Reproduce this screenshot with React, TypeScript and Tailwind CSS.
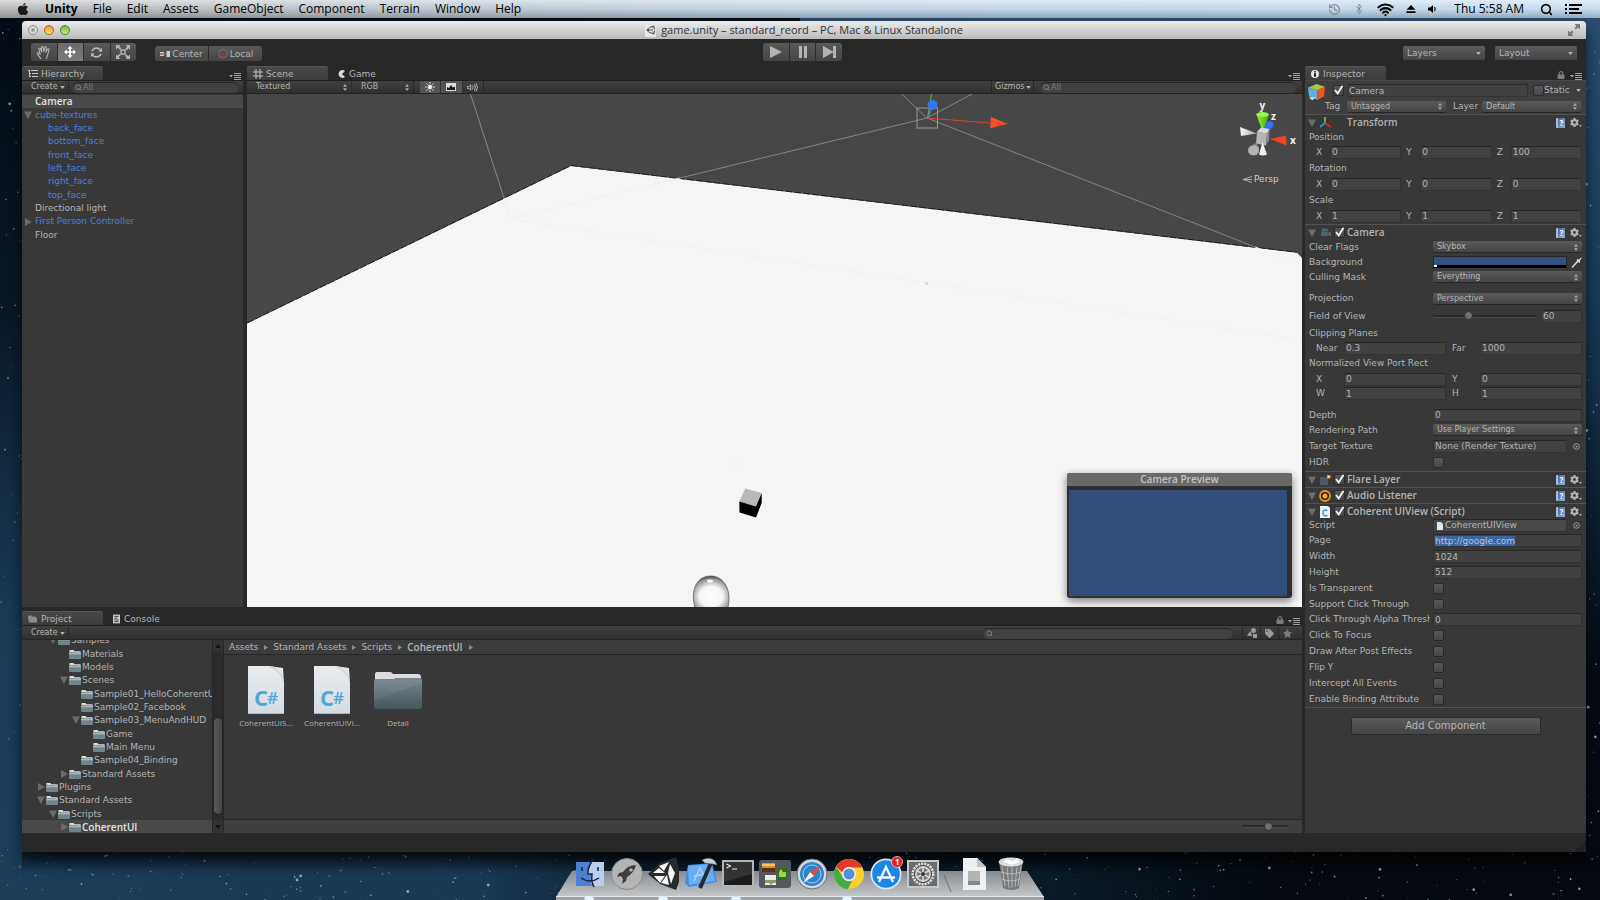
import { useEffect, useRef, type ReactNode } from 'react';
import { Bluetooth, History, Search, Wifi } from 'lucide-react';
import { FaApple, FaLock, FaTag } from 'react-icons/fa';
import { FaGear, FaStar } from 'react-icons/fa6';

const MENUS = ['File', 'Edit', 'Assets', 'GameObject', 'Component', 'Terrain', 'Window', 'Help'];

interface HierarchyNode {
  name: string;
  depth: number;
  prefab?: boolean;
  selected?: boolean;
  fold?: 'open' | 'closed';
}

const HIERARCHY: HierarchyNode[] = [
  { name: 'Camera', depth: 0, selected: true },
  { name: 'cube-textures', depth: 0, prefab: true, fold: 'open' },
  { name: 'back_face', depth: 1, prefab: true },
  { name: 'bottom_face', depth: 1, prefab: true },
  { name: 'front_face', depth: 1, prefab: true },
  { name: 'left_face', depth: 1, prefab: true },
  { name: 'right_face', depth: 1, prefab: true },
  { name: 'top_face', depth: 1, prefab: true },
  { name: 'Directional light', depth: 0 },
  { name: 'First Person Controller', depth: 0, prefab: true, fold: 'closed' },
  { name: 'Floor', depth: 0 },
];

interface ProjectNode {
  name: string;
  depth: number;
  fold?: 'open' | 'closed';
  selected?: boolean;
}

const PROJECT_TREE: ProjectNode[] = [
  { name: 'Samples', depth: 1, fold: 'open' },
  { name: 'Materials', depth: 2 },
  { name: 'Models', depth: 2 },
  { name: 'Scenes', depth: 2, fold: 'open' },
  { name: 'Sample01_HelloCoherentUI', depth: 3 },
  { name: 'Sample02_Facebook', depth: 3 },
  { name: 'Sample03_MenuAndHUD', depth: 3, fold: 'open' },
  { name: 'Game', depth: 4 },
  { name: 'Main Menu', depth: 4 },
  { name: 'Sample04_Binding', depth: 3 },
  { name: 'Standard Assets', depth: 2, fold: 'closed' },
  { name: 'Plugins', depth: 0, fold: 'closed' },
  { name: 'Standard Assets', depth: 0, fold: 'open' },
  { name: 'Scripts', depth: 1, fold: 'open' },
  { name: 'CoherentUI', depth: 2, fold: 'closed', selected: true },
];

const STARS = Array.from({ length: 420 }, (_, i) => {
  const a = Math.abs(Math.sin(i * 12.9898) * 43758.5453) % 1;
  const b = Math.abs(Math.sin(i * 78.233) * 12543.123) % 1;
  const c = Math.abs(Math.sin(i * 37.719) * 9631.77) % 1;
  // most of the sky is covered by the window, so keep them along the edges
  const low = i % 5 !== 0;
  return {
    x: low ? a * 1600 : i % 2 ? a * 22 : 1586 + a * 14,
    y: low ? 852 + b * 48 : b * 900,
    r: c > 0.94 ? 1.4 : 0.4 + c * 0.5,
    o: 0.15 + c * 0.5,
  };
});

function Wallpaper() {
  return (
    <svg className="absolute inset-0 h-full w-full" viewBox="0 0 1600 900" preserveAspectRatio="none" aria-hidden="true">
      <defs>
        <linearGradient id="skyLeft" x1="0" y1="0" x2="0" y2="1">
          <stop offset="0" stopColor="#040c16" />
          <stop offset="0.35" stopColor="#0a1826" />
          <stop offset="0.7" stopColor="#1b3c59" />
          <stop offset="1" stopColor="#1c4060" />
        </linearGradient>
        <linearGradient id="skyBottom" x1="0" y1="0" x2="1" y2="0">
          <stop offset="0" stopColor="#1c3e5b" />
          <stop offset="0.15" stopColor="#1b3953" />
          <stop offset="0.3" stopColor="#1a3954" />
          <stop offset="0.4" stopColor="#0d2030" />
          <stop offset="0.66" stopColor="#0a1a27" />
          <stop offset="0.8" stopColor="#04090f" />
          <stop offset="1" stopColor="#04080f" />
        </linearGradient>
        <linearGradient id="skyRight" x1="0" y1="0" x2="0" y2="1">
          <stop offset="0" stopColor="#2a4f70" />
          <stop offset="0.35" stopColor="#1a3a56" />
          <stop offset="0.55" stopColor="#0d2133" />
          <stop offset="0.75" stopColor="#060c14" />
          <stop offset="1" stopColor="#04080f" />
        </linearGradient>
        <linearGradient id="skyShade" x1="0" y1="0" x2="0" y2="1">
          <stop offset="0" stopColor="#000" stopOpacity="0.6" />
          <stop offset="1" stopColor="#000" stopOpacity="0" />
        </linearGradient>
      </defs>
      <rect width="1600" height="900" fill="#050d16" />
      <rect width="800" height="900" fill="url(#skyLeft)" />
      <rect x="800" width="800" height="900" fill="url(#skyRight)" />
      <rect y="846" width="1600" height="54" fill="url(#skyBottom)" />
      <rect x="22" y="850" width="1564" height="24" fill="url(#skyShade)" />
      {STARS.map((s, i) => (
        <circle key={i} cx={s.x} cy={s.y} r={s.r} fill="#cfe0ee" opacity={s.o} />
      ))}
    </svg>
  );
}

function MenuBar() {
  return (
    <header className="relative flex h-[18px] items-center bg-linear-to-r from-[#b9b9b9] via-[#bfd3e4] to-[#c4dbee] pr-[18px] pl-4 text-[12px] leading-[18px] text-black">
      <div className="pointer-events-none absolute inset-0 bg-linear-to-b from-white/50 via-transparent to-black/20" />
      <nav className="relative flex flex-1 items-center gap-[15px]">
        <button type="button" aria-label="Apple menu">
          <FaApple className="size-[14px] text-[#1c1c1c]" />
        </button>
        <button type="button" className="font-bold">Unity</button>
        {MENUS.map((menu) => (
          <button key={menu} type="button">{menu}</button>
        ))}
      </nav>
      <div className="relative flex items-center gap-3">
        <History className="size-[13px] text-[#7f8b96]" />
        <Bluetooth className="size-3 text-[#7f8b96]" />
        <Wifi className="size-[17px]" strokeWidth={3} />
        <svg viewBox="0 0 10 10" className="size-[10px]"><path d="M5 1l4.500 4.800h-9zM.5 7.300h9v1.700h-9z" /></svg>
        <svg viewBox="0 0 10 10" className="mr-1 size-[10px]"><path d="M0 3.500h2.200L5 1v8L2.200 6.500H0z" /><path d="M6.500 3q1.500 2 0 4" fill="none" stroke="#000" strokeWidth="1.200" /></svg>
        <span className="pr-1">Thu 5:58 AM</span>
        <Search className="size-[13px]" strokeWidth={3} />
        <svg viewBox="0 0 17 12" className="h-3 w-[17px]">
          <path d="M0 1h2v2H0zM4 1h13v2H4zM0 5h2v2H0zM4 5h10v2H4zM0 9h2v2H0zM4 9h13v2H4z" />
        </svg>
      </div>
    </header>
  );
}

function UnityMark({ className, fill = '#555' }: { className?: string; fill?: string }) {
  return (
    <svg viewBox="0 0 24 24" className={className}>
      <path
        fill={fill}
        d="M22 9.800L19.600 1 10.900 3.400 9.600 5.700 7 5.700 .6 12l6.400 6.300h2.600l1.300 2.300L19.600 23 22 14.200 20.700 12zM18 5l-3.200 5.600H8.400L5.900 8.100 10.500 6.800zM8.400 13.400h6.400L18 19l-7.500-1.800-4.600-1.300zM18.700 18.200L15.500 12l3.200-6.200L20.500 12z"
      />
    </svg>
  );
}

function TitleBar() {
  return (
    <div className="flex h-[18px] shrink-0 items-center rounded-t-[4px] bg-linear-to-b from-[#ededed] to-[#b9b9b9] px-[6px] text-[#333]">
      <div className="flex w-20 gap-[6px]">
        <button type="button" aria-label="Close" className="size-[10px] rounded-full border border-[#8c8c8c] bg-radial from-[#777] via-[#ddd] to-[#ccc]" />
        <button type="button" aria-label="Minimize" className="size-[10px] rounded-full border border-[#a2671a] bg-linear-to-b from-[#e99a2c] to-[#ffdc73]" />
        <button type="button" aria-label="Zoom" className="size-[10px] rounded-full border border-[#4c8028] bg-linear-to-b from-[#74b84b] to-[#c4f08c]" />
      </div>
      <h1 className="flex flex-1 items-center justify-center gap-[5px] font-['Open_Sans',sans-serif] text-[11px] leading-[18px]">
        <span className="flex h-[13px] w-[11px] items-center justify-center bg-[#e8e8e8]">
          <UnityMark className="size-[10px]" />
        </span>
        game.unity – standard_reord – PC, Mac &amp; Linux Standalone
      </h1>
      <div className="flex w-20 justify-end">
        <button type="button" aria-label="Full screen">
          <svg viewBox="0 0 12 12" className="size-3" fill="#777">
            <path d="M6.500 0H12v5.500L10 3.500 8 5.500 6.500 4l2-2zM5.500 12H0V6.500l2 2 2-2L5.500 8l-2 2z" />
          </svg>
        </button>
      </div>
    </div>
  );
}

function ToolButton({ label, active, children }: { label: string; active?: boolean; children: ReactNode }) {
  return (
    <button
      type="button"
      aria-label={label}
      className={`flex h-full flex-1 items-center justify-center border-r border-[#2c2c2c] last:border-r-0 ${
        active ? 'bg-linear-to-b from-[#6a6a6a] to-[#7c7c7c]' : 'bg-linear-to-b from-[#585858] to-[#454545]'
      }`}
    >
      {children}
    </button>
  );
}

function Toolbar() {
  return (
    <div className="flex h-[27px] shrink-0 items-start justify-between bg-[#282828] pt-1 pr-[9px] pl-[9px] text-[#b4b4b4]">
      <div className="flex w-[460px] gap-[19px]">
        <div className="flex h-[18px] w-[105px] overflow-hidden rounded-[3px]">
          <ToolButton label="Hand tool">
            <svg viewBox="0 0 16 16" className="size-[15px]" fill="none" stroke="#b4b4b4" strokeWidth="1.100" strokeLinejoin="round" strokeLinecap="round">
              <path d="M5 14.500L1.500 9.500q-.6-1.300.8-1.300L4.500 10 3 4.500q0-1.400 1.400-1L6 7.500 5.800 2.200q.7-1.400 1.700 0L8.300 7l1-4.800q1-1.100 1.700.2L10.600 7.600l1.800-3.400q1.300-.7 1.500.6L12.300 11 11 14.500" />
            </svg>
          </ToolButton>
          <ToolButton label="Move tool" active>
            <svg viewBox="0 0 14 14" className="size-3" fill="#fff">
              <path d="M7 0l3 3.200H8v2.800h2.800V4L14 7l-3.200 3V8H8v2.800h2L7 14l-3-3.200h2V8H3.200v2L0 7l3.200-3v2H6V3.200H4z" />
            </svg>
          </ToolButton>
          <ToolButton label="Rotate tool">
            <svg viewBox="0 0 14 14" className="size-[13px]" fill="none" stroke="#b4b4b4" strokeWidth="1.800">
              <path d="M2 5.500Q4 2 7.500 2.200 10 2.300 11.300 4.500M12 8.500Q10 12 6.500 11.800 4 11.700 2.700 9.500" />
              <path d="M13 2v4.300H9zM1 12V7.700h4z" fill="#b4b4b4" stroke="none" />
            </svg>
          </ToolButton>
          <ToolButton label="Scale tool">
            <svg viewBox="0 0 14 14" className="size-[14px]" fill="#b4b4b4">
              <path d="M0 0h4.500L3.200 1.300l2 2-1.400 1.400-2-2L0 4.500zM14 0v4.500l-1.300-1.300-2 2-1.400-1.400 2-2L9.500 0zM0 14V9.500l1.300 1.300 2-2 1.400 1.400-2 2L4.500 14zM14 14H9.500l1.300-1.300-2-2 1.400-1.400 2 2L14 9.500z" />
              <path d="M5 5h4v4H5z" fill="none" stroke="#b4b4b4" strokeWidth="1.400" />
            </svg>
          </ToolButton>
        </div>
        <div className="mt-[3px] flex h-[15px] w-[107px] overflow-hidden rounded-[3px] text-[9px] leading-[14px]">
          <ToolButton label="Pivot: Center">
            <svg viewBox="0 0 10 6" className="mr-[2px] h-[6px] w-[10px]"><path d="M0 1h4v1.500H0zM0 3.500h4V5H0z" fill="#ccc" /><path d="M4 2h2v2H4z" fill="#d33" /><path d="M6.500 0H10v6H6.500z" fill="#ccc" /></svg>
            Center
          </ToolButton>
          <ToolButton label="Rotation: Local">
            <svg viewBox="0 0 10 11" className="mr-[2px] h-[11px] w-[10px]" fill="none"><path d="M5 1l4 2v5L5 10 1 8V3z" stroke="#777" /><path d="M5 5v5M1 8l4-2 4 2" stroke="#a8323c" strokeWidth="1.200" /></svg>
            Local
          </ToolButton>
        </div>
      </div>
      <div className="mr-[3px] flex h-[18px] w-[79px] overflow-hidden rounded-[3px]">
        <ToolButton label="Play"><svg viewBox="0 0 12 12" className="size-3" fill="#b4b4b4"><path d="M0 0l12 6-12 6z" /></svg></ToolButton>
        <ToolButton label="Pause"><svg viewBox="0 0 12 12" className="size-3" fill="#b4b4b4"><path d="M2 0h3v12H2zM7 0h3v12H7z" /></svg></ToolButton>
        <ToolButton label="Step"><svg viewBox="0 0 13 12" className="h-3 w-[13px]" fill="#b4b4b4"><path d="M0 0l10 5.500V0h3v12h-3V6.500L0 12z" /></svg></ToolButton>
      </div>
      <div className="flex w-[460px] justify-end gap-[10px] pt-[3px]">
        {['Layers', 'Layout'].map((name) => (
          <button key={name} type="button" className="flex h-[14px] w-[82px] items-center justify-between rounded-[2px] bg-linear-to-b from-[#5c5c5c] to-[#444] px-1 text-[9px] leading-[13px]">
            {name}
            <Caret />
          </button>
        ))}
      </div>
    </div>
  );
}

function Caret() {
  return <svg viewBox="0 0 6 4" className="h-[3px] w-[5px] shrink-0" fill="#b4b4b4"><path d="M0 0h6L3 4z" /></svg>;
}

function Fold({ state }: { state?: 'open' | 'closed' }) {
  if (!state) return <span className="w-2 shrink-0" />;
  return (
    <svg viewBox="0 0 8 8" className="size-2 shrink-0" fill="#6b6b6b">
      <path d={state === 'open' ? 'M0 .5h8L4 8z' : 'M1 0l7 4-7 4z'} />
    </svg>
  );
}

function PaneMenu() {
  return (
    <button type="button" aria-label="Pane options" className="h-[7px]">
      <svg viewBox="0 0 12 7" className="h-[7px] w-3" fill="#a0a0a0">
        <path d="M0 2h4L2 4.500zM5 0h7v1H5zM5 2h7v1H5zM5 4h7v1H5zM5 6h7v1H5z" />
      </svg>
    </button>
  );
}

function Tab({ active, icon, children, width }: { active?: boolean; icon: ReactNode; children: ReactNode; width: string }) {
  return (
    <button
      type="button"
      className={`flex h-[14px] items-center gap-[3px] rounded-t-[2px] border-t pl-[6px] text-[9px] leading-[14px] text-[#b4b4b4] ${width} ${
        active ? 'border-[#555] bg-linear-to-b from-[#484848] to-[#3c3c3c]' : 'border-transparent'
      }`}
    >
      {icon}
      {children}
    </button>
  );
}

function SearchBox({ label, placeholder, className }: { label: string; placeholder?: string; className: string }) {
  return (
    <label className={`flex h-[11px] items-center gap-px rounded-full border-t border-[#232323] bg-[#414141] pl-[3px] ${className}`}>
      <Search className="size-[7px] shrink-0 text-[#8a8a8a]" strokeWidth={3} />
      <input type="text" aria-label={label} placeholder={placeholder} className="h-[10px] w-full min-w-0 bg-transparent text-[8px] leading-[10px] outline-none placeholder:text-[#7d7d7d]" />
    </label>
  );
}

const BAR = 'flex shrink-0 items-center border-y border-t-[#1f1f1f] border-b-[#242424] bg-linear-to-b from-[#404040] to-[#303030] text-[8px] leading-[12px] text-[#b4b4b4]';

function CreateButton() {
  return (
    <button type="button" className="flex h-full w-[38px] shrink-0 items-center justify-between border-r border-[#282828] pr-[3px]">
      Create
      <Caret />
    </button>
  );
}

function HierarchyPanel() {
  return (
    <section className="flex w-[221px] shrink-0 flex-col bg-[#383838]">
      <div className="flex items-end justify-between bg-[#282828] pr-[2px]">
        <Tab active width="w-[81px]" icon={<svg viewBox="0 0 10 8" className="h-2 w-[10px]" fill="#c4c4c4"><path d="M0 0h2v1H0zM3 0h7v1H3zM1 1h1v6H1zM4 3h6v1H4zM2 3h1v1H2zM4 6h6v1H4zM2 6h1v1H2z" /></svg>}>
          Hierarchy
        </Tab>
        <PaneMenu />
      </div>
      <div className={`${BAR} h-[14px] pr-[5px] pl-[9px]`}>
        <CreateButton />
        <SearchBox label="Search hierarchy" placeholder="All" className="ml-[3px] flex-1" />
      </div>
      <ul className="flex h-[148px] flex-col pt-px text-[9px] leading-[13px]">
        {HIERARCHY.map((node) => (
          <li
            key={node.name}
            className={`flex flex-1 items-center gap-[3px] pl-[2px] ${node.selected ? "bg-[#494949] font-['Open_Sans',sans-serif] text-[10px] font-semibold text-[#e2e2e2]" : node.prefab ? 'text-[#4c7edb]' : 'text-[#b4b4b4]'}`}
          >
            <Fold state={node.fold} />
            <span className={node.depth ? 'pl-[13px]' : ''}>{node.name}</span>
          </li>
        ))}
      </ul>
    </section>
  );
}

function SceneView() {
  return (
    <svg className="absolute inset-0 h-full w-full" viewBox="247 94 1055 513" preserveAspectRatio="xMidYMid slice" role="img" aria-label="Scene">
      <defs>
        <radialGradient id="capsule" cx="0.5" cy="0.65" r="0.65">
          <stop offset="0" stopColor="#fff" />
          <stop offset="0.5" stopColor="#f6f6f6" />
          <stop offset="0.85" stopColor="#969696" />
          <stop offset="1" stopColor="#3e3e3e" />
        </radialGradient>
        <linearGradient id="green" x1="0" x2="1"><stop offset="0" stopColor="#8cf03a" /><stop offset="1" stopColor="#4fa814" /></linearGradient>
        <linearGradient id="grey" x1="0" x2="1"><stop offset="0" stopColor="#f5f5f5" /><stop offset="1" stopColor="#a8a8a8" /></linearGradient>
      </defs>
      <rect x="247" y="94" width="1055" height="513" fill="#474747" />
      <path d="M247 323.500L571 166 1297 252.700 1302 258V607H247z" fill="#f5f5f5" />
      <path d="M247 323L571 165.500 1297 252.200" fill="none" stroke="#111" strokeWidth="0.800" strokeDasharray="7 2" />
      <g fill="none" stroke="#8c8c8c" strokeWidth="0.900">
        <path d="M470.500 94L504 198M901.500 94L927 118 972 94M927 118L680 178M927 118L1255 247" />
      </g>
      <g fill="none" stroke="#f0f0f0" strokeWidth="1">
        <path d="M504 198l5 21L680 178M509 219L1302 340M1255 247l47 17" />
        <path d="M738 458.500l4.500 4.500-4.500 4.500-4.500-4.500z" />
      </g>
      <rect x="925" y="282" width="3" height="3" fill="#dcdcdc" />
      <rect x="917" y="108" width="20.500" height="20" fill="none" stroke="#9a9a9a" />
      <path d="M931.500 94L927.500 118" stroke="#7bb51e" />
      <path d="M932 106L928 118" stroke="#3f7ff5" strokeWidth="1.500" />
      <circle cx="932.700" cy="105" r="5" fill="#3577f6" />
      <path d="M927 118l63 5" stroke="#d8432a" />
      <path d="M991 117l17 7-18 4.500z" fill="#f4502a" />
      <path d="M1000 125.500l8-1.500-18 4.500z" fill="#8d2510" />

      <path d="M745.300 488.500l16.400 4.500-5.700 13.500-16.700-5z" fill="#b8b8b8" />
      <path d="M739.300 501.500l16.700 5 5.700-13.500v10L756 517.500l-16.500-5z" fill="#000" />
      <path d="M695 607.500C690 590 697 576 710.500 576S732 590 728 607.500z" fill="url(#capsule)" stroke="#555" strokeWidth="0.700" />
      <ellipse cx="710" cy="581" rx="3" ry="1.500" fill="#fff" />

      {/* orientation gizmo */}
      <path d="M1256.500 114.500L1261.500 129h2.500l5-14.500z" fill="url(#green)" />
      <ellipse cx="1262.500" cy="114.500" rx="6.200" ry="2.500" fill="#9af54f" />
      <path d="M1266 122l7.500 3-3 5-6-1z" fill="#2c6bea" />
      <circle cx="1269.500" cy="124.500" r="3.600" fill="#2f72f5" />
      <path d="M1240 127l1 9 16-2.500z" fill="url(#grey)" />
      <path d="M1286 135.500l.5 10L1270 139z" fill="#ef4323" />
      <path d="M1257 132l4-4.500 8.500 1.500-2.500 4.500z" fill="#d9d9dc" />
      <path d="M1257 132l10 1.500-1 12-10-2z" fill="#b4b4b8" />
      <path d="M1267 133.500l2.500-4.500-.5 11-3 5.500z" fill="#8c8c92" />
      <path d="M1249 147l7-4 3 4-2 8z" fill="#8e8e90" />
      <ellipse cx="1253.500" cy="150.500" rx="5.500" ry="5" fill="#b2b2b5" />
      <path d="M1262.500 142l-3.500 12.500q4 2 8 0z" fill="#f0f0f0" />
      <g fill="#f2f2f2" fontFamily="'Open Sans', sans-serif" fontWeight="700" fontSize="10">
        <text x="1259.500" y="109">y</text>
        <text x="1271" y="120">z</text>
        <text x="1290" y="144">x</text>
      </g>
      <path d="M1252 176.500l-9 3 9 3M1252 179.500h-9" fill="none" stroke="#b8b8b8" strokeWidth="0.900" />
      <text x="1254" y="182" fill="#cdcdcd" fontFamily="'DejaVu Sans', sans-serif" fontSize="9">Persp</text>
    </svg>
  );
}

function UpDown() {
  return <svg viewBox="0 0 4 7" className="h-[7px] w-1 shrink-0" fill="#a8a8a8"><path d="M2 0l2 2.800H0zM2 7l2-2.800H0z" /></svg>;
}

function ScenePanel() {
  return (
    <section className="flex min-w-0 flex-1 flex-col">
      <div className="flex items-end bg-[#282828] pr-[2px]">
        <Tab active width="w-[81px]" icon={<svg viewBox="0 0 10 10" className="size-[10px]" stroke="#c4c4c4"><path d="M3 0v10M7 0v10M0 3h10M0 7h10" /></svg>}>
          Scene
        </Tab>
        <Tab width="w-[80px] ml-1" icon={<svg viewBox="0 0 8 8" className="size-2" fill="#d8d8d8"><path d="M7 1Q4-1 1.500 1.500-.5 4 1.500 6.500 4 9 7 7L4 4z" /></svg>}>
          Game
        </Tab>
        <span className="flex-1" />
        <PaneMenu />
      </div>
      <div className={`${BAR} h-[14px] pr-[6px] pl-[9px]`}>
        <button type="button" className="flex h-full w-[96px] items-center justify-between border-r border-[#282828] pr-1">Textured <UpDown /></button>
        <button type="button" className="ml-[9px] flex h-full w-[53px] items-center justify-between border-r border-[#282828] pr-1">RGB <UpDown /></button>
        <div className="ml-[6px] flex h-full w-16">
          <button type="button" aria-label="Scene lighting" className="flex flex-1 items-center justify-center border-r border-[#333] bg-[#545454]">
            <svg viewBox="0 0 12 12" className="size-[10px]" stroke="#f0f0f0" strokeWidth="1.200">
              <circle cx="6" cy="6" r="2.300" fill="#f0f0f0" />
              <path d="M6 0v2M6 10v2M0 6h2M10 6h2M1.800 1.800l1.400 1.400M8.800 8.800l1.400 1.400M1.800 10.200l1.400-1.400M8.800 3.200l1.400-1.400" />
            </svg>
          </button>
          <button type="button" aria-label="Scene effects" className="flex flex-1 items-center justify-center border-r border-[#333] bg-[#545454]">
            <svg viewBox="0 0 10 8" className="h-2 w-[10px]"><path d="M0 0h10v8H0z" fill="#ddd" /><path d="M1 7V4l2 1 2-3 2 2.500 2-1V7z" fill="#1a1a1a" /></svg>
          </button>
          <button type="button" aria-label="Scene audio" className="flex flex-1 items-center justify-center border-r border-[#282828]">
            <svg viewBox="0 0 12 10" className="h-[9px] w-[11px]" fill="none" stroke="#c4c4c4"><path d="M0 4h2l2-2v6L2 6H0zM6 3q1.500 2 0 4M8 1.500q2.500 3.500 0 7M10 .5q3 4.500 0 9" /></svg>
          </button>
        </div>
        <span className="flex-1" />
        <button type="button" className="mr-[6px] flex h-full w-[43px] items-center justify-between border-x border-[#282828] pr-[2px] pl-[3px]">Gizmos <Caret /></button>
        <SearchBox label="Search scene" placeholder="All" className="w-[256px]" />
      </div>
      <div className="relative min-h-[120px] flex-1 overflow-hidden bg-[#474747]">
        <SceneView />
        <figure className="absolute right-[10px] bottom-[9px] flex h-[125px] w-[225px] flex-col rounded-[3px] bg-[#2f2f2f] shadow-[0_3px_8px_rgba(0,0,0,0.500)]">
          <figcaption className="h-[13px] rounded-t-[3px] bg-[#696969] text-center font-['Open_Sans',sans-serif] text-[10px] leading-[13px] font-semibold text-[#c4c4c4]">Camera Preview</figcaption>
          <div className="mt-1 mr-[5px] mb-[2px] ml-[2px] flex-1 bg-[#314d79]" />
        </figure>
      </div>
    </section>
  );
}

function FolderIcon() {
  return (
    <svg viewBox="0 0 12 10" className="h-[10px] w-3 shrink-0">
      <path d="M.5 3V1h4l.8 1.200h6.200V4z" fill="#dadada" />
      <path d="M0 3.500h12V9q0 1-1 1H1Q0 10 0 9z" fill="#71848a" />
      <path d="M0 3.500h12v1.800H0z" fill="#a9b7bb" />
    </svg>
  );
}

const INDENT = ['pl-[15px]', 'pl-[27px]', 'pl-[38px]', 'pl-[50px]', 'pl-[62px]'];

function ScriptThumb() {
  return (
    <svg viewBox="0 0 36 48" className="h-12 w-9">
      <defs>
        <linearGradient id="paper" x1="0" y1="0" x2="0" y2="1"><stop offset="0" stopColor="#e9edf0" /><stop offset="1" stopColor="#d3dae1" /></linearGradient>
        <linearGradient id="fold" x1="0" y1="1" x2="1" y2="0"><stop offset="0.300" stopColor="#8a9299" /><stop offset="0.700" stopColor="#e4e8eb" /></linearGradient>
      </defs>
      <path d="M0 0h22q12 1 14 16v32H0z" fill="url(#paper)" />
      <path d="M21 0l14 2 1 14Q33 7 21 0z" fill="url(#fold)" />
      <path d="M0 47h36v1H0z" fill="#aab2ba" />
      <text x="6" y="40" fontFamily="'Open Sans', sans-serif" fontWeight="700" fontSize="22" fill="#4fa8d8">C</text>
      <text x="19" y="38" fontFamily="'Open Sans', sans-serif" fontWeight="600" fontSize="17" fill="#4fa8d8">#</text>
    </svg>
  );
}

function FolderThumb() {
  return (
    <svg viewBox="0 0 48 38" className="h-[38px] w-12">
      <defs>
        <linearGradient id="folderBody" x1="0" y1="0" x2="0" y2="1"><stop offset="0" stopColor="#76868f" /><stop offset="1" stopColor="#47565d" /></linearGradient>
      </defs>
      <path d="M1 10V3q0-2 2-2h13q2 0 3 2h25q3 0 3 3v6H1z" fill="#dcdcdc" />
      <path d="M0 10q0-2 2-2h17l3-1h24q2 0 2 2v26q0 3-3 3H3q-3 0-3-3z" fill="url(#folderBody)" />
      <path d="M0 30L48 12v-3H2L0 11z" fill="#fff" opacity="0.060" />
    </svg>
  );
}

function ProjectPanel() {
  return (
    <section className="flex h-[223px] shrink-0 flex-col bg-[#383838] text-[#b4b4b4]">
      <div className="flex h-[15px] items-end bg-[#282828]">
        <Tab active width="w-[81px]" icon={<svg viewBox="0 0 10 8" className="mr-px h-2 w-[9px]" fill="#8c8c8c"><path d="M0 2V0h4l1 1.500h4V3h1v5H1z" /></svg>}>
          Project
        </Tab>
        <Tab width="w-[80px] ml-1" icon={<svg viewBox="0 0 8 10" className="mr-px h-[10px] w-[7px]"><path d="M0 0h8v10H0z" fill="#ccc" /><path d="M1.500 2h5M1.500 4h3.500M1.500 6h5M1.500 8h5" stroke="#333" /></svg>}>
          Console
        </Tab>
        <span className="flex-1" />
        <div className="flex items-end gap-1 pr-[2px]">
          <FaLock className="mb-px size-2 text-[#7c7c7c]" />
          <PaneMenu />
        </div>
      </div>
      <div className={`${BAR} h-[15px] pt-px pl-[9px]`}>
        <CreateButton />
        <span className="flex-1" />
        <SearchBox label="Search project" className="w-[250px]" />
        <div className="ml-[9px] flex h-full w-[60px] text-[#9a9a9a]">
          <button type="button" aria-label="Search by type" className="flex w-[18px] items-center justify-center border-l border-[#282828]">
            <svg viewBox="0 0 10 10" className="size-[10px]" fill="currentColor"><circle cx="6.500" cy="2.500" r="2.500" /><path d="M0 8l3-5 2.500 5zM6 6h4v4H6z" /></svg>
          </button>
          <button type="button" aria-label="Search by label" className="flex w-[18px] items-center justify-center border-l border-[#282828]"><FaTag className="size-[9px]" /></button>
          <button type="button" aria-label="Save search" className="flex w-[18px] items-center justify-center border-l border-[#282828] text-[#7c7c7c]"><FaStar className="size-[9px]" /></button>
        </div>
      </div>
      <div className="flex min-h-0 flex-1">
        <div className="flex w-[190px] shrink-0 flex-col justify-end overflow-hidden">
          <ul className="flex h-[200px] shrink-0 flex-col text-[9px] leading-[12px]">
            {PROJECT_TREE.map((node, i) => (
              <li key={i} className={`flex flex-1 items-end whitespace-nowrap ${INDENT[node.depth]} ${node.selected ? "bg-[#494949] font-['Open_Sans',sans-serif] text-[10px] font-semibold text-[#e2e2e2]" : ''}`}>
                <span className="flex h-3 items-center">
                  <Fold state={node.fold} />
                  <span className="mr-px ml-px flex"><FolderIcon /></span>
                  {node.name}
                </span>
              </li>
            ))}
          </ul>
        </div>
        <div className="flex w-3 shrink-0 flex-col items-center justify-between border-x border-[#262626] bg-[#333] py-1">
          <svg viewBox="0 0 6 4" className="h-1 w-[6px]" fill="#141414"><path d="M0 4h6L3 0z" /></svg>
          <div className="mt-1 flex w-full flex-1 items-end rounded-full bg-[#2b2b2b] py-[6px]">
            <div className="h-[98px] w-full rounded-full border border-[#222] bg-linear-to-r from-[#5a5a5a] to-[#434343]" />
          </div>
          <svg viewBox="0 0 6 4" className="mt-1 h-1 w-[6px]" fill="#141414"><path d="M0 0h6L3 4z" /></svg>
        </div>
        <div className="flex min-w-0 flex-1 flex-col">
          <nav className="flex h-[15px] items-center border-b border-[#262626] bg-[#3c3c3c] pl-[5px] text-[9px] leading-[14px]">
            {['Assets', 'Standard Assets', 'Scripts', 'CoherentUI'].map((crumb) => (
              <a key={crumb} href="#" className="flex items-center gap-[6px] pr-[5px] last:font-['Open_Sans',sans-serif] last:text-[10px] last:font-semibold">
                {crumb}
                <svg viewBox="0 0 4 5" className="h-[5px] w-1" fill="#8c8c8c"><path d="M0 0l4 2.500L0 5z" /></svg>
              </a>
            ))}
          </nav>
          <div className="flex flex-1 gap-[2px] pt-[11px] pl-[10px] font-['Open_Sans',sans-serif] text-[8px] leading-[12px]">
            {['CoherentUIS...', 'CoherentUIVi...', 'Detail'].map((asset) => (
              <button key={asset} type="button" className="flex h-[63px] w-16 flex-col items-center justify-between">
                <span className="flex h-12 items-center">{asset === 'Detail' ? <FolderThumb /> : <ScriptThumb />}</span>
                {asset}
              </button>
            ))}
          </div>
          <div className="flex h-[14px] items-center justify-end border-t border-[#262626] bg-[#3f3f3f] pr-[14px]">
            <Slider label="Icon size" value={60} className="w-[46px]" />
          </div>
        </div>
      </div>
    </section>
  );
}

function Slider({ label, value, className }: { label: string; value: number; className: string }) {
  return (
    <input
      type="range"
      aria-label={label}
      defaultValue={value}
      className={`h-[3px] appearance-none rounded-full border-b border-[#4c4c4c] bg-[#2a2a2a] [&::-webkit-slider-thumb]:size-[9px] [&::-webkit-slider-thumb]:appearance-none [&::-webkit-slider-thumb]:rounded-full [&::-webkit-slider-thumb]:border [&::-webkit-slider-thumb]:border-[#303030] [&::-webkit-slider-thumb]:bg-[#707070] ${className}`}
    />
  );
}

function Check({ label, checked }: { label: string; checked?: boolean }) {
  return (
    <span className="relative flex size-[11px] shrink-0">
      <input type="checkbox" aria-label={label} defaultChecked={checked} className="peer size-[11px] appearance-none rounded-[2px] border border-[#2b2b2b] bg-linear-to-b from-[#575757] to-[#474747]" />
      <svg viewBox="0 0 11 11" className="pointer-events-none absolute inset-0 hidden size-[11px] peer-checked:block" fill="none" stroke="#f4f4f4" strokeWidth="1.800">
        <path d="M2 5l2.700 3.500L9.500.8" />
      </svg>
    </span>
  );
}

function Dropdown({ label, value, className = 'flex-1' }: { label: string; value: string; className?: string }) {
  return (
    <span className={`relative flex items-center ${className}`}>
      <select aria-label={label} className="h-3 w-full appearance-none rounded-[2px] border-b border-[#262626] bg-linear-to-b from-[#5a5a5a] to-[#454545] pl-1 text-[8px] leading-[11px] text-[#b4b4b4]">
        <option>{value}</option>
      </select>
      <span className="pointer-events-none absolute right-1"><UpDown /></span>
    </span>
  );
}

const FIELD = 'h-[13px] min-w-0 flex-1 border border-t-[#262626] border-[#323232] bg-[#414141] pl-px text-[9px] leading-[11px] text-[#b4b4b4] outline-none';

function Field({ label, value }: { label: string; value: string }) {
  return <input type="text" aria-label={label} defaultValue={value} className={FIELD} />;
}

function Row({ label, children, height = 'h-4' }: { label: string; children?: ReactNode; height?: string }) {
  return (
    <div className={`flex items-center pr-1 pl-1 ${height}`}>
      <span className="mr-[3px] w-[121px] shrink-0 overflow-hidden whitespace-nowrap">{label}</span>
      {children}
    </div>
  );
}

function Vector({ name, values }: { name: string; values: string[] }) {
  return (
    <div className="grid h-4 grid-cols-3 items-center gap-[5px] pr-1 pl-[11px]">
      {values.map((value, i) => (
        <label key={i} className="flex min-w-0 items-center">
          <span className="w-[14px] shrink-0">{'XYZ'[i]}</span>
          <Field label={`${name} ${'XYZ'[i]}`} value={value} />
        </label>
      ))}
    </div>
  );
}

function Pair({ items, height = 'h-4' }: { items: [string, string][]; height?: string }) {
  return (
    <div className={`grid grid-cols-2 items-center gap-[6px] pr-1 pl-[11px] ${height}`}>
      {items.map(([label, value]) => (
        <label key={label} className="flex min-w-0 items-center">
          <span className="w-7 shrink-0">{label}</span>
          <Field label={label} value={value} />
        </label>
      ))}
    </div>
  );
}

function ComponentHeader({ title, icon, toggle = true }: { title: string; icon: ReactNode; toggle?: boolean }) {
  return (
    <div className="flex h-4 items-center border-t border-[#525252] pr-1 pl-[3px] font-['Open_Sans',sans-serif] text-[10px] font-semibold">
      <Fold state="open" />
      <span className="ml-[3px] flex w-3 justify-center">{icon}</span>
      <span className="ml-[3px] flex w-[13px] items-center">{toggle && <Check label={`Enable ${title}`} checked />}</span>
      <h3 className="flex-1">{title}</h3>
      <button type="button" aria-label={`${title} help`} className="mr-[5px] flex h-[10px] w-[9px] items-center justify-center rounded-[1px] border-l-2 border-[#a9c0dc] bg-linear-to-br from-[#3c5f96] to-[#9fb8d8] text-[8px] leading-none font-bold text-white">?</button>
      <button type="button" aria-label={`${title} settings`} className="flex items-end">
        <FaGear className="size-[9px]" />
        <svg viewBox="0 0 4 3" className="h-[2px] w-[3px]" fill="#b4b4b4"><path d="M0 0h4L2 3z" /></svg>
      </button>
    </div>
  );
}

function Picker() {
  return (
    <button type="button" aria-label="Select object" className="flex w-[15px] shrink-0 justify-end">
      <svg viewBox="0 0 8 8" className="mr-[2px] size-[7px]"><circle cx="4" cy="4" r="3.200" fill="none" stroke="#a8a8a8" /><circle cx="4" cy="4" r="1" fill="#a8a8a8" /></svg>
    </button>
  );
}

function InspectorPanel() {
  const pageRef = useRef<HTMLInputElement>(null);

  useEffect(() => {
    pageRef.current?.focus();
    pageRef.current?.select();
  }, []);

  return (
    <aside className="flex w-[281px] shrink-0 flex-col bg-[#383838] text-[9px] leading-[13px] text-[#b4b4b4]">
      <div className="flex items-end bg-[#282828] pr-1">
        <Tab active width="w-[81px]" icon={<svg viewBox="0 0 8 8" className="mr-px size-2"><circle cx="4" cy="4" r="4" fill="#e4e4e4" /><path d="M3 1.200h2v1.400H3zM3 3.300h2v3.400H3z" fill="#222" /></svg>}>
          Inspector
        </Tab>
        <span className="flex-1" />
        <FaLock className="mr-[5px] mb-px size-2 text-[#7c7c7c]" />
        <PaneMenu />
      </div>

      <div className="flex h-[34px] gap-2 border-t border-[#484848] bg-[#3e3e3e] pt-[3px] pr-[5px] pl-[3px]">
        <svg viewBox="0 0 18 18" className="size-[17px] shrink-0">
          <path d="M0 4L9 0l9 3-8 3.500z" fill="#a9c93c" />
          <path d="M0 4l10 2.500V17L1 13z" fill="#5cb2e4" />
          <path d="M18 3l-8 3.500V17l7-4z" fill="#f0561c" />
          <path d="M1 14h7l-3.500 3.500z" fill="#d8d8d8" />
        </svg>
        <div className="flex min-w-0 flex-1 flex-col gap-[3px]">
          <div className="flex items-center">
            <Check label="Active" checked />
            <input type="text" aria-label="Name" defaultValue="Camera" className={`${FIELD} mr-[5px] ml-[3px]`} />
            <Check label="Static" />
            <span className="w-[32px]">Static</span>
            <Caret />
          </div>
          <div className="-ml-[8px] flex items-center">
            <span className="w-[22px]">Tag</span>
            <Dropdown label="Tag" value="Untagged" />
            <span className="mr-[2px] ml-[7px] w-[27px]">Layer</span>
            <Dropdown label="Layer" value="Default" />
          </div>
        </div>
      </div>

      <ComponentHeader
        title="Transform"
        toggle={false}
        icon={<svg viewBox="0 0 11 11" className="size-[11px]" strokeWidth="1.800"><path d="M5 6V0" stroke="#6fbf2a" /><path d="M5 6L0 10" stroke="#2f8fe0" /><path d="M5 6l6 4" stroke="#e02424" /></svg>}
      />
      <Row label="Position" height="h-[14px]" />
      <Vector name="Position" values={['0', '0', '100']} />
      <Row label="Rotation" />
      <Vector name="Rotation" values={['0', '0', '0']} />
      <Row label="Scale" />
      <Vector name="Scale" values={['1', '1', '1']} />

      <ComponentHeader
        title="Camera"
        icon={<svg viewBox="0 0 12 10" className="h-[9px] w-[11px]" fill="#50646e"><circle cx="3.500" cy="2" r="2" /><circle cx="7" cy="2" r="1.800" /><path d="M1 4h7.500v5H1zM9 5l3-1.500v6L9 8z" /></svg>}
      />
      <Row label="Clear Flags" height="h-[14px]"><Dropdown label="Clear Flags" value="Skybox" /></Row>
      <Row label="Background">
        <button type="button" aria-label="Background colour" className="flex h-3 min-w-0 flex-1 items-end border border-[#262626] border-b-black bg-[#34507f]">
          <span className="block h-[2px] w-full bg-linear-to-r from-white from-[3px] to-black to-[3px]" />
        </button>
        <svg viewBox="0 0 11 11" className="ml-1 h-[11px] w-[11px]"><path d="M1 10.500l6-6.500" fill="none" stroke="#ddd" strokeWidth="1.500" /><path d="M5.500 3l1-1L8 2.500 10 .5l.8.8-2 2.200.5 1.500-1 1z" fill="#ddd" /></svg>
      </Row>
      <Row label="Culling Mask" height="h-[14px]"><Dropdown label="Culling Mask" value="Everything" /></Row>
      <div className="mt-[7px]"><Row label="Projection" height="h-[15px]"><Dropdown label="Projection" value="Perspective" /></Row></div>
      <Row label="Field of View" height="h-5">
        <Slider label="Field of View" value={33} className="min-w-0 flex-1" />
        <span className="ml-[5px] flex w-[41px]"><Field label="Field of View value" value="60" /></span>
      </Row>
      <Row label="Clipping Planes" height="h-[14px]" />
      <Pair items={[['Near', '0.3'], ['Far', '1000']]} />
      <div className="flex h-[15px] items-center pl-1">Normalized View Port Rect</div>
      <Pair items={[['X', '0'], ['Y', '0']]} height="h-4" />
      <Pair items={[['W', '1'], ['H', '1']]} height="h-[13px]" />
      <div className="mt-2"><Row label="Depth" height="h-[14px]"><Field label="Depth" value="0" /></Row></div>
      <Row label="Rendering Path"><Dropdown label="Rendering Path" value="Use Player Settings" /></Row>
      <Row label="Target Texture"><Field label="Target Texture" value="None (Render Texture)" /><Picker /></Row>
      <div className="mb-px"><Row label="HDR"><Check label="HDR" /></Row></div>

      <ComponentHeader title="Flare Layer" icon={<svg viewBox="0 0 11 11" className="size-[11px]"><path d="M0 3h8v8H0z" fill="#4a5c64" /><path d="M7 1h3.500v3.500H7z" fill="#e58a3c" /><path d="M8 2h1.500v1.500H8z" fill="#fff3e0" /></svg>} />
      <ComponentHeader title="Audio Listener" icon={<svg viewBox="0 0 12 12" className="size-3"><circle cx="6" cy="6" r="5" fill="#222" stroke="#f59a0c" strokeWidth="1.800" /><circle cx="6" cy="6" r="2.500" fill="#f9a51a" /></svg>} />
      <ComponentHeader title="Coherent UIView (Script)" icon={<svg viewBox="0 0 10 12" className="h-3 w-[10px]"><path d="M0 0h8l2 2v10H0z" fill="#eef2f5" /><path d="M7.500 4.500Q3 3 3 7t4.500 2.500" fill="none" stroke="#3f9fd0" strokeWidth="1.600" /></svg>} />

      <div className="flex h-[189px] flex-col justify-between border-b border-[#525252]">
        <Row label="Script" height="h-[14px]">
          <span className="flex h-[13px] min-w-0 flex-1 items-center border border-[#323232] border-t-[#262626] bg-[#484848] pl-[3px] leading-[11px]">
            <svg viewBox="0 0 6 8" className="mr-[2px] h-2 w-[6px]"><path d="M0 0h4l2 2v6H0z" fill="#dfe8ee" /></svg>
            CoherentUIView
          </span>
          <Picker />
        </Row>
        <Row label="Page"><input ref={pageRef} type="text" aria-label="Page" defaultValue="http://google.com" className={`${FIELD} selection:bg-[#3d66a5] selection:text-[#b4c4dc]`} /></Row>
        <Row label="Width"><Field label="Width" value="1024" /></Row>
        <Row label="Height"><Field label="Height" value="512" /></Row>
        <Row label="Is Transparent"><Check label="Is Transparent" /></Row>
        <Row label="Support Click Through"><Check label="Support Click Through" /></Row>
        <Row label="Click Through Alpha Threshold"><Field label="Click Through Alpha Threshold" value="0" /></Row>
        {['Click To Focus', 'Draw After Post Effects', 'Flip Y', 'Intercept All Events', 'Enable Binding Attribute'].map((label) => (
          <Row key={label} label={label}><Check label={label} /></Row>
        ))}
      </div>
      <button type="button" className="mx-auto mt-[9px] h-[18px] w-[190px] rounded-[2px] border border-[#2a2a2a] bg-linear-to-b from-[#5a5a5a] to-[#444] text-[10px] leading-[16px]">
        Add Component
      </button>
    </aside>
  );
}

const DOCK_ICONS: { name: string; art: ReactNode }[] = [
  {
    name: 'Finder',
    art: (
      <>
        <path d="M2 6h28v24H2z" fill="#b9cdf0" /><path d="M2 6h15q-4 8-3 12h3q-1 7 1 12H2z" fill="#4d7fd3" />
        <path d="M19 3q-6 10-5 15h4q-1 8 2 13M8 11v4M24 11v4M7 22q9 6 18 0" fill="none" stroke="#16233c" strokeWidth="1.500" />
      </>
    ),
  },
  {
    name: 'Launchpad',
    art: (
      <>
        <circle cx="16" cy="18" r="15.500" fill="#b4b4b4" stroke="#8a8a8a" /><path d="M25 9q-8 0-13 7l-4 1-2 4 4-1 2 3-1 5 4-3 1-4q7-4 9-12z" fill="#3d3d3d" /><circle cx="20" cy="14" r="1.800" fill="#b4b4b4" />
      </>
    ),
  },
  {
    name: 'Unity',
    art: (
      <>
        <path d="M0 18L12 7l16-6 3 13v12l-3 8-16-6z" fill="#2a2a2a" /><path d="M11 10l10-4-5 9zM5 17h12l-6-5zM6 20l11 0-5 7zM19 19l2 10-8-2zM22 8l5 9-4 11-3-11z" fill="#f5f5f5" />
      </>
    ),
  },
  {
    name: 'Xcode',
    art: (
      <>
        <path d="M3 9l24-2 5 19-28 5-4-4z" fill="#3f8ee4" /><path d="M3 10l23-2 4 17-26 4z" fill="#69aef2" /><path d="M9 25l6-13 6 12M9 20l14-2" stroke="#a9d2fa" strokeWidth="1.500" fill="none" /><path d="M26 7L15 32" stroke="#26292d" strokeWidth="4" /><path d="M17 4q8-4 13 1l2 4-4-1-8-1z" fill="#c9ced4" stroke="#6b7075" strokeWidth="0.500" />
      </>
    ),
  },
  {
    name: 'Terminal',
    art: (
      <>
        <path d="M0 4h32v28H0z" fill="#b4b4b4" /><path d="M2 6h28v23H2z" fill="#1c1c1c" /><path d="M30 6v12L2 26V6z" fill="#333" /><path d="M4.500 8l4 2-4 2M10 13h5" stroke="#eee" strokeWidth="1.200" fill="none" />
      </>
    ),
  },
  {
    name: 'Mission Control',
    art: (
      <>
        <rect y="4" width="32" height="28" rx="3" fill="#55585c" /><path d="M3 7h13v9H3z" fill="#e08a36" /><path d="M3 8h13v2H3z" fill="#f6c65a" /><path d="M3 12h13v4H3z" fill="#5a2f14" /><path d="M19 12h10v12H19z" fill="#2f6f24" /><path d="M20 16h7v5h-7z" fill="#8fd84a" /><circle cx="22" cy="15" r="1.500" fill="#e9b02c" /><path d="M6 19h11v10H6z" fill="#e8efe8" /><path d="M6 24h11v3H6z" fill="#7ba25e" /><circle cx="12" cy="27" r="1.500" fill="#c86aa0" />
      </>
    ),
  },
  {
    name: 'Safari',
    art: (
      <>
        <circle cx="16" cy="18" r="15" fill="#d5d8da" stroke="#6c7074" /><circle cx="16" cy="18" r="12" fill="#2f83cd" /><circle cx="16" cy="18" r="9" fill="none" stroke="#9bd0f5" /><path d="M25 9l-7 11-4-4z" fill="#e84a2a" /><path d="M7 27l7-11 4 4z" fill="#f4f4f4" />
      </>
    ),
  },
  {
    name: 'Chrome',
    art: (
      <>
        <circle cx="16" cy="18" r="15" fill="#fbd02c" /><path d="M3 10.500A15 15 0 0 1 29.500 11.500H16a7 7 0 0 0-6.500 5z" fill="#e23b2e" /><path d="M3 10.500L10 21.500a7 7 0 0 0 9 3L15 33A15 15 0 0 1 3 10.500z" fill="#3fae4a" /><circle cx="16" cy="18" r="7" fill="#f2f2f2" /><circle cx="16" cy="18" r="5.500" fill="#4f8fe0" />
      </>
    ),
  },
  {
    name: 'App Store',
    art: (
      <>
        <circle cx="16" cy="18" r="15.500" fill="#dfe6ec" /><circle cx="16" cy="18" r="13.800" fill="#1c86e4" /><path d="M9 26l7-15 7 15M7 21.500h18" stroke="#f2f8fd" strokeWidth="2.300" fill="none" />
        <circle cx="27" cy="6" r="5.500" fill="#e0201c" stroke="#f6d0ce" strokeWidth="0.800" /><text x="25" y="9" fontSize="8" fontWeight="700" fill="#fff">1</text>
      </>
    ),
  },
  {
    name: 'System Preferences',
    art: (
      <>
        <path d="M0 4h32v28H0z" fill="#c8c8c8" /><path d="M2 6h28v24H2z" fill="#6b6b6b" /><circle cx="16" cy="18" r="10" fill="none" stroke="#dedede" strokeWidth="3" strokeDasharray="2 1" /><circle cx="16" cy="18" r="8.500" fill="#cfcfcf" stroke="#3a3a3a" /><circle cx="16" cy="18" r="6" fill="#777" /><path d="M16 10v16M9 14l14 8M23 14L9 22" stroke="#d6d6d6" strokeWidth="1.600" /><circle cx="16" cy="18" r="2" fill="#333" />
      </>
    ),
  },
];

function DockIcon({ name, art }: { name: string; art: ReactNode }) {
  return (
    <button type="button" aria-label={name} className="flex w-[37px] justify-center">
      <svg viewBox="0 0 32 36" className="h-9 w-8 overflow-visible">{art}</svg>
    </button>
  );
}

function Dock() {
  return (
    <footer className="relative mx-auto flex h-12 w-[488px] shrink-0 items-start justify-center pt-1">
      <svg viewBox="0 0 488 29" className="absolute bottom-0 left-0 h-[29px] w-full" aria-hidden="true">
        <defs>
          <linearGradient id="shelf" x1="0" y1="0" x2="0" y2="1"><stop offset="0" stopColor="#86898d" /><stop offset="1" stopColor="#c6c9cc" /></linearGradient>
        </defs>
        <path d="M16 0h455l17 26H0z" fill="url(#shelf)" />
        <path d="M0 26h488v3H0z" fill="#9ea1a5" />
        <path d="M0 25h488v1H0z" fill="#e8eaec" />
        {[33, 107, 180, 291].map((x) => <ellipse key={x} cx={x} cy="27.500" rx="5" ry="1.800" fill="#e6f6ff" />)}
        <path d="M388 4l7 17" stroke="#6f7275" strokeWidth="1" />
      </svg>
      <div className="relative flex">
        {DOCK_ICONS.map((icon) => <DockIcon key={icon.name} {...icon} />)}
        <span className="w-[14px]" />
        <DockIcon
          name="Downloads"
          art={<><path d="M5 2h14l9 9v23H5z" fill="#f0f0f0" /><path d="M19 2l9 9h-9z" fill="#c4c4c4" /><path d="M10 15h12v14H10z" fill="#b0b3b5" /><path d="M10 25h12v4H10z" fill="#85888a" /></>}
        />
        <DockIcon
          name="Trash"
          art={<><path d="M4 5l4 27q8 4 16 0l4-27z" fill="#77797b" /><path d="M7 10l3 20M12 11l2 21M17 11v21M22 11l-2 20M26 10l-3 20M6 16q10 4 20 0M7 23q9 4 18 0" stroke="#c3c5c7" strokeWidth="0.800" fill="none" /><ellipse cx="16" cy="6" rx="12" ry="4" fill="#d6d8da" stroke="#efefef" /><path d="M8 6l4-3 5 2 5-2 3 3-8 3z" fill="#fff" /></>}
        />
      </div>
    </footer>
  );
}

export default function App() {
  return (
    <div className="relative flex min-h-screen flex-col overflow-hidden bg-[#050d16] font-['Open_Sans','Noto_Sans',sans-serif]">
      <Wallpaper />
      <MenuBar />
      <main className="relative mt-[3px] mr-[14px] ml-[22px] flex flex-1 flex-col rounded-t-[4px] bg-[#282828] font-['DejaVu_Sans','Open_Sans',sans-serif] shadow-[0_8px_16px_rgba(0,0,0,0.600)]">
        <TitleBar />
        <Toolbar />
        <div className="flex flex-1 gap-[3px]">
          <div className="flex min-w-0 flex-1 flex-col gap-[3px]">
            <div className="flex flex-1 gap-1">
              <HierarchyPanel />
              <ScenePanel />
            </div>
            <ProjectPanel />
          </div>
          <InspectorPanel />
        </div>
        <div className="flex h-[19px] shrink-0 items-end justify-end bg-[#282828]">
          <svg viewBox="0 0 10 10" className="size-[10px]" stroke="#111"><path d="M0 10L10 0M3 10l7-7M6 10l4-4" /></svg>
        </div>
      </main>
      <Dock />
    </div>
  );
}
